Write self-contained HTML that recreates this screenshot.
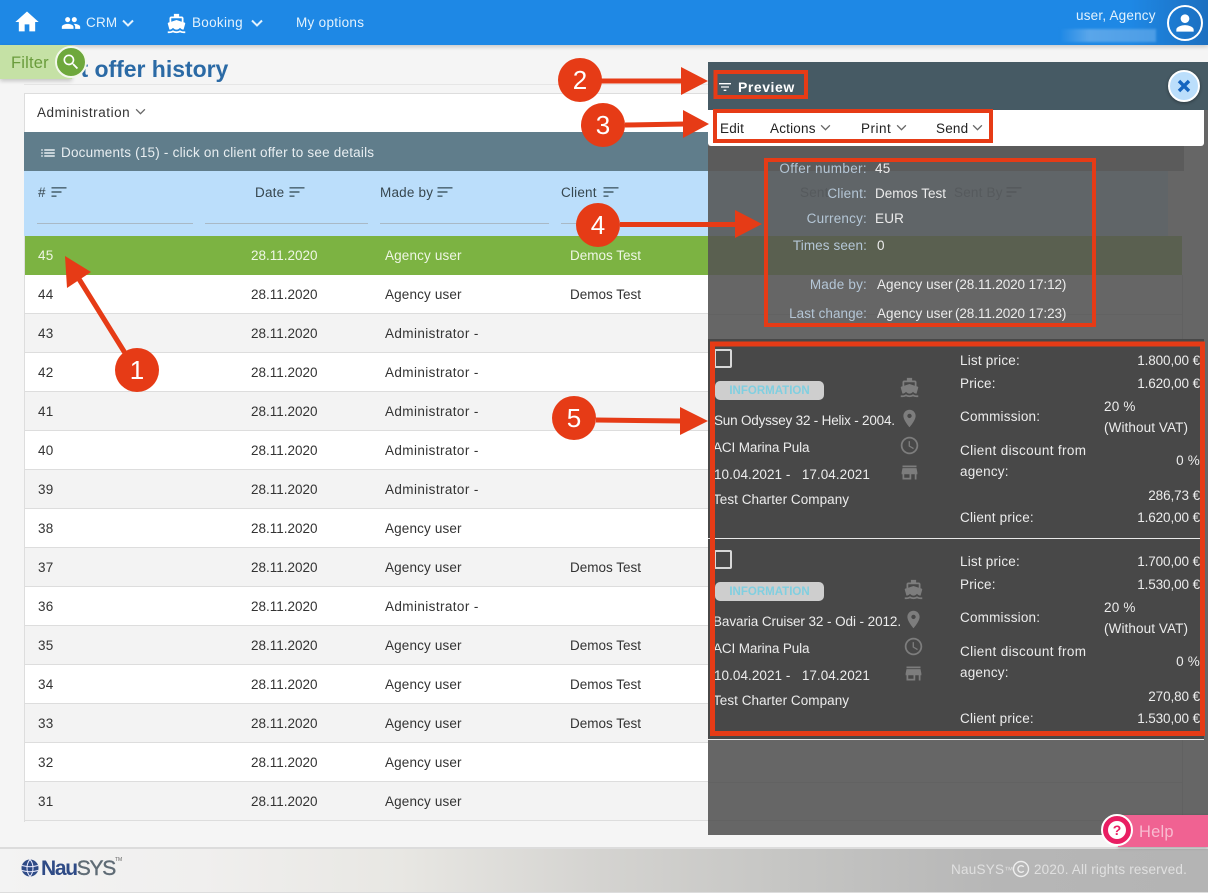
<!DOCTYPE html>
<html lang="en"><head><meta charset="utf-8"><title>Client offer history</title>
<style>
*{box-sizing:border-box}
html,body{margin:0;padding:0}
body{width:1208px;height:893px;overflow:hidden;position:relative;background:#f5f5f5;font:13.5px/20px "Liberation Sans",sans-serif;color:#333}
.a{position:absolute}
.t{position:absolute;white-space:nowrap;line-height:20px;letter-spacing:.2px;margin-top:1px}
.r{text-align:right}
.v{letter-spacing:-.1px}
.row{position:absolute;left:25px;width:1157px;height:39px;border-bottom:1px solid #ddd;background:#fff}
.row.g{background:#f3f3f3}
.row.s{background:#7cb342;color:#eef6e4;border:0}
.row span{position:absolute;top:10px;white-space:nowrap;letter-spacing:.2px}
.row span:nth-child(1){left:13px}.row span:nth-child(2){left:226px;letter-spacing:0}.row span:nth-child(3){left:360px;letter-spacing:.15px}.row span:nth-child(4){left:545px;letter-spacing:0}
svg.i{position:absolute;fill:currentColor}
.u{position:absolute;top:223px;height:1px;background:#a9b9c6}
.h{position:absolute;top:183px;color:#37474f;letter-spacing:.2px;white-space:nowrap}
.w{color:#ececec}
.l{color:#b4c6d6}
.ic{color:#7d7d7d}
</style></head><body>
<svg width="0" height="0" style="position:absolute"><defs>
<symbol id="home" viewBox="0 0 24 24"><path d="M10 20v-6h4v6h5v-8h3L12 3 2 12h3v8z"/></symbol>
<symbol id="people" viewBox="0 0 24 24"><path d="M16 11c1.66 0 2.99-1.34 2.99-3S17.66 5 16 5c-1.66 0-3 1.34-3 3s1.34 3 3 3zm-8 0c1.66 0 2.99-1.34 2.99-3S9.66 5 8 5C6.34 5 5 6.34 5 8s1.34 3 3 3zm0 2c-2.33 0-7 1.17-7 3.5V19h14v-2.5c0-2.33-4.67-3.5-7-3.5zm8 0c-.29 0-.62.02-.97.05 1.16.84 1.97 1.97 1.97 3.45V19h6v-2.5c0-2.33-4.67-3.5-7-3.5z"/></symbol>
<symbol id="boat" viewBox="0 0 24 24"><path d="M20 21c-1.39 0-2.78-.47-4-1.32-2.44 1.71-5.56 1.71-8 0C6.78 20.53 5.39 21 4 21H2v2h2c1.38 0 2.74-.35 4-.99 2.52 1.29 5.48 1.29 8 0 1.26.65 2.62.99 4 .99h2v-2h-2zM3.95 19H4c1.6 0 3.02-.88 4-2 .98 1.12 2.4 2 4 2s3.02-.88 4-2c.98 1.12 2.4 2 4 2h.05l1.89-6.68c.08-.26.06-.54-.06-.78s-.34-.42-.6-.5L20 10.62V6c0-1.1-.9-2-2-2h-3V1H9v3H6c-1.1 0-2 .9-2 2v4.62l-1.29.42c-.26.08-.48.26-.6.5s-.15.52-.06.78L3.95 19zM6 6h12v3.97L12 8 6 9.97V6z"/></symbol>
<symbol id="search" viewBox="0 0 24 24"><path d="M15.5 14h-.79l-.28-.27C15.41 12.59 16 11.11 16 9.5 16 5.91 13.09 3 9.5 3S3 5.91 3 9.5 5.91 16 9.5 16c1.61 0 3.09-.59 4.23-1.57l.27.28v.79l5 4.99L20.49 19l-4.99-5zm-6 0C7.01 14 5 11.99 5 9.5S7.01 5 9.5 5 14 7.01 14 9.5 11.99 14 9.5 14z"/></symbol>
<symbol id="sort" viewBox="0 0 24 24"><path d="M3 18h6v-2H3v2zM3 6v2h18V6H3zm0 7h12v-2H3v2z"/></symbol>
<symbol id="list" viewBox="0 0 24 24"><path d="M3 13h2v-2H3v2zm0 4h2v-2H3v2zm0-8h2V7H3v2zm4 4h14v-2H7v2zm0 4h14v-2H7v2zM7 7v2h14V7H7z"/></symbol>
<symbol id="filter" viewBox="0 0 24 24"><path d="M10 18h4v-2h-4v2zM3 6v2h18V6H3zm3 7h12v-2H6v2z"/></symbol>
<symbol id="place" viewBox="0 0 24 24"><path d="M12 2C8.13 2 5 5.13 5 9c0 5.25 7 13 7 13s7-7.75 7-13c0-3.87-3.13-7-7-7zm0 9.5c-1.38 0-2.5-1.12-2.5-2.5s1.12-2.5 2.5-2.5 2.5 1.12 2.5 2.5-1.12 2.5-2.5 2.5z"/></symbol>
<symbol id="clock" viewBox="0 0 24 24"><path d="M11.99 2C6.47 2 2 6.48 2 12s4.47 10 9.99 10C17.52 22 22 17.52 22 12S17.52 2 11.99 2zM12 20c-4.42 0-8-3.58-8-8s3.58-8 8-8 8 3.58 8 8-3.58 8-8 8zm.5-13H11v6l5.25 3.15.75-1.23-4.5-2.67z"/></symbol>
<symbol id="store" viewBox="0 0 24 24"><path d="M20 4H4v2h16V4zm1 10v-2l-1-5H4l-1 5v2h1v6h10v-6h4v6h2v-6h1zm-9 4H6v-4h6v4z"/></symbol>
<symbol id="person" viewBox="0 0 24 24"><path d="M12 12c2.21 0 4-1.79 4-4s-1.79-4-4-4-4 1.79-4 4 1.79 4 4 4zm0 2c-2.67 0-8 1.34-8 4v2h16v-2c0-2.66-5.33-4-8-4z"/></symbol>
<symbol id="chev" viewBox="0 0 12 8"><path d="M1 1.5l5 5 5-5" fill="none" stroke="currentColor" stroke-width="1.5"/></symbol>
<symbol id="chevb" viewBox="0 0 12 8"><path d="M1 1.5l5 5 5-5" fill="none" stroke="currentColor" stroke-width="2"/></symbol>
</defs></svg>

<!-- page content -->
<div class="t" style="left:80.5px;top:53px;line-height:30px;font-size:23px;font-weight:bold;color:#2b6aa5;letter-spacing:-.03px">t offer history</div>
<div class="a" style="left:24px;top:84px;width:1160px;height:1px;background:#e6e6e6"></div>
<div class="a" style="left:24px;top:93px;width:1160px;height:40px;background:#fff;border:1px solid #ddd"></div>
<div class="t" style="left:37px;top:102px;color:#333;letter-spacing:.55px">Administration</div>
<svg class="i" style="left:135px;top:108px;color:#666" width="11" height="7"><use href="#chev"/></svg>
<div class="a" style="left:24px;top:132px;width:1160px;height:39px;background:#607d8b"></div>
<svg class="i" style="left:39px;top:144px;color:#e8eef1" width="18" height="18"><use href="#list"/></svg>
<div class="t" style="left:61px;top:142px;color:#e8eef1;letter-spacing:.21px">Documents (15) - click on client offer to see details</div>
<div class="a" style="left:24px;top:171px;width:1144px;height:65px;background:#bbdefb"></div>
<div class="h" style="left:38px">#</div><svg class="i" style="left:48.5px;top:182px;color:#56707f" width="20" height="20"><use href="#sort"/></svg>
<div class="h" style="left:255px">Date</div><svg class="i" style="left:286.5px;top:182px;color:#56707f" width="20" height="20"><use href="#sort"/></svg>
<div class="h" style="left:380px">Made by</div><svg class="i" style="left:434.5px;top:182px;color:#56707f" width="20" height="20"><use href="#sort"/></svg>
<div class="h" style="left:561px">Client</div><svg class="i" style="left:600.5px;top:182px;color:#56707f" width="20" height="20"><use href="#sort"/></svg>
<div class="u" style="left:37px;width:156px"></div><div class="u" style="left:205px;width:163px"></div><div class="u" style="left:380px;width:169px"></div><div class="u" style="left:561px;width:147px"></div>
<div class="a" style="left:24px;top:236px;width:1px;height:586px;background:#ddd"></div>
<div class="row s" style="top:236px"><span>45</span><span>28.11.2020</span><span>Agency user</span><span>Demos Test</span></div>
<div class="row" style="top:275px"><span>44</span><span>28.11.2020</span><span>Agency user</span><span>Demos Test</span></div>
<div class="row g" style="top:314px"><span>43</span><span>28.11.2020</span><span style="letter-spacing:.4px">Administrator -</span></div>
<div class="row" style="top:353px"><span>42</span><span>28.11.2020</span><span style="letter-spacing:.4px">Administrator -</span></div>
<div class="row g" style="top:392px"><span>41</span><span>28.11.2020</span><span style="letter-spacing:.4px">Administrator -</span></div>
<div class="row" style="top:431px"><span>40</span><span>28.11.2020</span><span style="letter-spacing:.4px">Administrator -</span></div>
<div class="row g" style="top:470px"><span>39</span><span>28.11.2020</span><span style="letter-spacing:.4px">Administrator -</span></div>
<div class="row" style="top:509px"><span>38</span><span>28.11.2020</span><span>Agency user</span></div>
<div class="row g" style="top:548px"><span>37</span><span>28.11.2020</span><span>Agency user</span><span>Demos Test</span></div>
<div class="row" style="top:587px"><span>36</span><span>28.11.2020</span><span style="letter-spacing:.4px">Administrator -</span></div>
<div class="row g" style="top:626px"><span>35</span><span>28.11.2020</span><span>Agency user</span><span>Demos Test</span></div>
<div class="row" style="top:665px"><span>34</span><span>28.11.2020</span><span>Agency user</span><span>Demos Test</span></div>
<div class="row g" style="top:704px"><span>33</span><span>28.11.2020</span><span>Agency user</span><span>Demos Test</span></div>
<div class="row" style="top:743px"><span>32</span><span>28.11.2020</span><span>Agency user</span></div>
<div class="row g" style="top:782px"><span>31</span><span>28.11.2020</span><span>Agency user</span></div>

<!-- top bar -->
<div class="a" style="left:0;top:0;width:1208px;height:45px;background:linear-gradient(90deg,#1e88e5 0,#1e88e5 1130px,#1c6fc0 1208px);box-shadow:0 2px 4px rgba(0,0,0,.18)"></div>
<svg class="i" style="left:12.5px;top:8px;color:#fff" width="28" height="28"><use href="#home"/></svg>
<svg class="i" style="left:61px;top:13px;color:#fff" width="20" height="20"><use href="#people"/></svg>
<div class="t" style="left:86px;top:12px;color:#e3f2fd">CRM</div>
<svg class="i" style="left:122px;top:19px;color:#e3f2fd" width="12" height="8"><use href="#chevb"/></svg>
<svg class="i" style="left:166px;top:12.5px;color:#fff" width="21" height="21"><use href="#boat"/></svg>
<div class="t" style="left:192px;top:12px;color:#e3f2fd;letter-spacing:.3px">Booking</div>
<svg class="i" style="left:251px;top:19px;color:#e3f2fd" width="12" height="8"><use href="#chevb"/></svg>
<div class="t" style="left:296px;top:12px;color:#e3f2fd;letter-spacing:.3px">My options</div>
<div class="t" style="left:1076px;top:5px;color:#e3f2fd">user, Agency</div>
<div class="a" style="left:1060px;top:29px;width:96px;height:13px;background:linear-gradient(90deg,#1e88e5,#5aa6ea 30%,#4c9de6 100%);filter:blur(1px)"></div>
<div class="a" style="left:1167px;top:5px;width:36px;height:36px;border:2px solid #fff;border-radius:50%"></div>
<svg class="i" style="left:1172px;top:10px;color:#fff" width="26" height="26"><use href="#person"/></svg>

<!-- filter tab -->
<div class="a" style="left:0;top:45px;width:72px;height:34px;background:#c5e1a5;box-shadow:0 2px 4px rgba(0,0,0,.2)"></div>
<div class="t" style="left:11px;top:52px;color:#6a9c3c;font-size:16.5px">Filter</div>
<div class="a" style="left:55px;top:46px;width:32px;height:32px;border-radius:50%;background:#6ea83c;border:2px solid #f3f8ec"></div>
<svg class="i" style="left:61px;top:52px;color:#fff" width="20" height="20"><use href="#search"/></svg>

<!-- footer -->
<div class="a" style="left:0;top:847px;width:1208px;height:46px;background:linear-gradient(90deg,#f3f3f3 0,#f0efee 200px,#e8e7e3 400px,#d5d4d1 590px,#c6c6c4 780px,#b6b6b6 1000px,#b4b4b4 100%);border-top:2px solid #dcdcdc;border-bottom:1px solid #ddd"></div>
<svg class="a" style="left:21px;top:859px" width="18" height="18" viewBox="0 0 18 18"><circle cx="9" cy="9" r="8.5" fill="#2f4b86"/><path d="M1 6.5C6 8 12 8 17 6.5M1 11.5C6 13 12 13 17 11.5M9 .5C5 5 5 13 9 17.5M9 .5C13 5 13 13 9 17.5" fill="none" stroke="#eef" stroke-width="1"/></svg>
<div class="t" style="left:41px;top:857px;font-size:21px;line-height:22px;font-weight:bold;letter-spacing:-1.3px;color:#2f4b86">Nau<span style="color:#5f6b75;font-weight:normal;-webkit-text-stroke:.4px #5f6b75">SYS</span></div>
<div class="t" style="left:115px;top:855px;font-size:5px;line-height:8px;color:#666;letter-spacing:0">TM</div>
<div class="t" style="left:951px;top:859px;color:#e0e0e0;letter-spacing:.25px">NauSYS<span style="font-size:9px;vertical-align:1px;letter-spacing:0">™</span></div>
<svg class="a" style="left:1012px;top:860px" width="18" height="18" viewBox="0 0 18 18"><circle cx="9" cy="9" r="7.5" fill="none" stroke="#eee" stroke-width="1.4"/><path d="M11.7 6.8A3.3 3.3 0 1 0 11.7 11.2" fill="none" stroke="#eee" stroke-width="1.4"/></svg>
<div class="t" style="left:1034px;top:859px;color:#e0e0e0;letter-spacing:.17px">2020. All rights reserved.</div>

<!-- preview panel -->
<div class="a" style="left:708px;top:62px;width:500px;height:773px;background:#666"></div>
<div class="a" style="left:708px;top:146px;width:476px;height:25px;background:#5b5b5b"></div>
<div class="a" style="left:708px;top:171px;width:460px;height:65px;background:#606568"></div>
<div class="a" style="left:708px;top:236px;width:474px;height:39px;background:#5a6050"></div>
<div class="a" style="left:1182px;top:275px;width:1px;height:546px;background:#616161"></div>
<div class="a" style="left:708px;top:314px;width:474px;height:1px;background:#626262"></div>
<div class="a" style="left:708px;top:782px;width:474px;height:1px;background:#626262"></div>
<div class="a" style="left:708px;top:820px;width:474px;height:1px;background:#626262"></div>
<div class="a" style="left:708px;top:62px;width:500px;height:48px;background:#465a64"></div>
<div class="a" style="left:708px;top:110px;width:496px;height:36px;background:#fff;border-radius:0 0 3px 3px"></div>
<div class="a" style="left:708px;top:339px;width:496px;height:400px;background:#484848"></div>
<div class="a" style="left:708px;top:538px;width:496px;height:1px;background:#e8e8e8"></div>
<div class="a" style="left:708px;top:739px;width:496px;height:1px;background:#e8e8e8"></div>

<div class="h" style="left:800px;color:#565a5d">Sent</div>
<div class="h" style="left:954px;color:#565a5d">Sent By</div><svg class="i" style="left:1004px;top:182px;color:#565a5d" width="20" height="20"><use href="#sort"/></svg>

<svg class="i" style="left:717px;top:79px;color:#fff" width="16" height="16"><use href="#filter"/></svg>
<div class="t" style="left:738px;top:77px;margin-top:0;color:#fff;font-weight:bold;font-size:14px;letter-spacing:.55px">Preview</div>
<div class="a" style="left:1168px;top:70px;width:32px;height:32px;border-radius:50%;background:#bbdefb;border:2px solid #fff;box-shadow:0 1px 3px rgba(0,0,0,.4)"></div>
<svg class="a" style="left:1177px;top:79px" width="14" height="14" viewBox="0 0 14 14"><path d="M2 2l10 10M12 2L2 12" stroke="#1565c0" stroke-width="3.4" fill="none"/></svg>

<div class="t" style="left:720px;top:118px;color:#222">Edit</div>
<div class="t" style="left:770px;top:118px;color:#222">Actions</div>
<svg class="i" style="left:820px;top:124px;color:#666" width="11" height="7"><use href="#chev"/></svg>
<div class="t" style="left:861px;top:118px;color:#222;letter-spacing:.5px">Print</div>
<svg class="i" style="left:895.5px;top:124px;color:#666" width="11" height="7"><use href="#chev"/></svg>
<div class="t" style="left:936px;top:118px;color:#222">Send</div>
<svg class="i" style="left:971.5px;top:124px;color:#666" width="11" height="7"><use href="#chev"/></svg>

<div class="t r l" style="right:341px;top:158px;letter-spacing:.35px">Offer number:</div><div class="t w" style="left:875px;top:158px">45</div>
<div class="t r l" style="right:341px;top:183px">Client:</div><div class="t w" style="left:875px;top:183px;letter-spacing:0">Demos Test</div>
<div class="t r l" style="right:341px;top:208px">Currency:</div><div class="t w" style="left:875px;top:208px">EUR</div>
<div class="t r l" style="right:341px;top:235px;letter-spacing:.1px">Times seen:</div><div class="t w" style="left:877px;top:235px">0</div>
<div class="t r l" style="right:341px;top:274px">Made by:</div><div class="t w" style="left:877px;top:274px;letter-spacing:.05px">Agency user</div><div class="t w v" style="left:955px;top:274px">(28.11.2020 17:12)</div>
<div class="t r l" style="right:341px;top:303px;letter-spacing:.05px">Last change:</div><div class="t w" style="left:877px;top:303px;letter-spacing:.05px">Agency user</div><div class="t w v" style="left:955px;top:303px">(28.11.2020 17:23)</div>

<!-- item 1 -->
<div class="a" style="left:714px;top:349px;width:18px;height:19px;border:2px solid #d8d8d8;border-radius:2px"></div>
<div class="a" style="left:715px;top:381px;width:109px;height:19px;background:#cecece;border-radius:5px;color:#80cfe0;font-weight:bold;font-size:11.5px;line-height:21px;text-align:center">INFORMATION</div>
<svg class="i ic" style="left:898.5px;top:377px" width="21" height="21"><use href="#boat"/></svg>
<svg class="i ic" style="left:898.5px;top:407.5px" width="21" height="21"><use href="#place"/></svg>
<svg class="i ic" style="left:898.5px;top:434.5px" width="21" height="21"><use href="#clock"/></svg>
<svg class="i ic" style="left:898.5px;top:461.5px" width="21" height="21"><use href="#store"/></svg>
<div class="t w" style="left:714px;top:410px;letter-spacing:-.2px">Sun Odyssey 32 - Helix - 2004.</div>
<div class="t w" style="left:713px;top:437px;letter-spacing:-.13px">ACI Marina Pula</div>
<div class="t w" style="left:714px;top:464px;letter-spacing:.05px">10.04.2021 - &nbsp; 17.04.2021</div>
<div class="t w" style="left:713px;top:489px;letter-spacing:.05px">Test Charter Company</div>
<div class="t w" style="left:960px;top:350px">List price:</div><div class="t w r v" style="right:8px;top:350px">1.800,00 €</div>
<div class="t w" style="left:960px;top:373px">Price:</div><div class="t w r v" style="right:8px;top:373px">1.620,00 €</div>
<div class="t w" style="left:960px;top:406px">Commission:</div>
<div class="t w" style="left:1104px;top:396px">20 %</div><div class="t w" style="left:1104px;top:417px;letter-spacing:.1px">(Without VAT)</div>
<div class="t w" style="left:960px;top:440px;letter-spacing:.35px">Client discount from</div><div class="t w" style="left:960px;top:461px">agency:</div>
<div class="t w r" style="right:8px;top:450px">0 %</div>
<div class="t w r v" style="right:8px;top:485px">286,73 €</div>
<div class="t w" style="left:960px;top:507px">Client price:</div><div class="t w r v" style="right:8px;top:507px">1.620,00 €</div>

<!-- item 2 -->
<div class="a" style="left:714px;top:550px;width:18px;height:19px;border:2px solid #d8d8d8;border-radius:2px"></div>
<div class="a" style="left:715px;top:582px;width:109px;height:19px;background:#cecece;border-radius:5px;color:#80cfe0;font-weight:bold;font-size:11.5px;line-height:21px;text-align:center">INFORMATION</div>
<svg class="i ic" style="left:903px;top:578.5px" width="21" height="21"><use href="#boat"/></svg>
<svg class="i ic" style="left:903px;top:608.5px" width="21" height="21"><use href="#place"/></svg>
<svg class="i ic" style="left:903px;top:636px" width="21" height="21"><use href="#clock"/></svg>
<svg class="i ic" style="left:903px;top:662.5px" width="21" height="21"><use href="#store"/></svg>
<div class="t w" style="left:713px;top:611px;letter-spacing:-.08px">Bavaria Cruiser 32 - Odi - 2012.</div>
<div class="t w" style="left:713px;top:638px;letter-spacing:-.13px">ACI Marina Pula</div>
<div class="t w" style="left:714px;top:665px;letter-spacing:.05px">10.04.2021 - &nbsp; 17.04.2021</div>
<div class="t w" style="left:713px;top:690px;letter-spacing:.05px">Test Charter Company</div>
<div class="t w" style="left:960px;top:551px">List price:</div><div class="t w r v" style="right:8px;top:551px">1.700,00 €</div>
<div class="t w" style="left:960px;top:574px">Price:</div><div class="t w r v" style="right:8px;top:574px">1.530,00 €</div>
<div class="t w" style="left:960px;top:607px">Commission:</div>
<div class="t w" style="left:1104px;top:597px">20 %</div><div class="t w" style="left:1104px;top:618px;letter-spacing:.1px">(Without VAT)</div>
<div class="t w" style="left:960px;top:641px;letter-spacing:.35px">Client discount from</div><div class="t w" style="left:960px;top:662px">agency:</div>
<div class="t w r" style="right:8px;top:651px">0 %</div>
<div class="t w r v" style="right:8px;top:686px">270,80 €</div>
<div class="t w" style="left:960px;top:708px">Client price:</div><div class="t w r v" style="right:8px;top:708px">1.530,00 €</div>

<!-- help -->
<div class="a" style="left:1118px;top:815px;width:90px;height:32px;background:#f06292;box-shadow:0 1px 3px rgba(0,0,0,.25)"></div>
<div class="t" style="left:1139px;top:821px;color:#f8bbd0;font-size:16.5px">Help</div>
<div class="a" style="left:1101px;top:814px;width:32px;height:32px;border-radius:50%;background:#e91e63;border:2px solid #fff"></div>
<div class="a" style="left:1108px;top:821px;width:18px;height:18px;border-radius:50%;background:#fff;color:#e91e63;font-weight:bold;font-size:14px;line-height:18px;text-align:center">?</div>

<!-- annotations -->
<svg class="a" style="left:0;top:0" width="1208" height="893" viewBox="0 0 1208 893">
<g fill="none" stroke="#e63b16" stroke-width="4">
<rect x="715.5" y="72" width="90.5" height="25"/>
<rect x="715" y="111" width="276" height="30"/>
<rect x="766" y="160" width="328" height="165"/>
<rect x="712.5" y="344" width="490" height="389.5" stroke-width="5"/>
<path d="M125 353L79 279M600 81H682M625 125L685 124M620 224.5H737M596 420L682 421" stroke-width="5"/>
</g>
<g fill="#e63b16">
<path d="M65 256L67 288L91 272Z"/>
<path d="M708 81L681 67V95Z"/>
<path d="M709 124L683 110V138Z"/>
<path d="M762 224L735 210V238Z"/>
<path d="M708 421L680 407V435Z"/>
<circle cx="137" cy="370" r="22"/><circle cx="580" cy="80" r="22"/><circle cx="603" cy="125" r="22"/><circle cx="598" cy="225" r="22"/><circle cx="574" cy="418" r="22"/>
</g>
<g fill="#fff" font-family="Liberation Sans, sans-serif" font-size="26" text-anchor="middle">
<text x="137" y="379">1</text><text x="580" y="89">2</text><text x="603" y="134">3</text><text x="598" y="234">4</text><text x="574" y="427">5</text>
</g>
</svg>
</body></html>
